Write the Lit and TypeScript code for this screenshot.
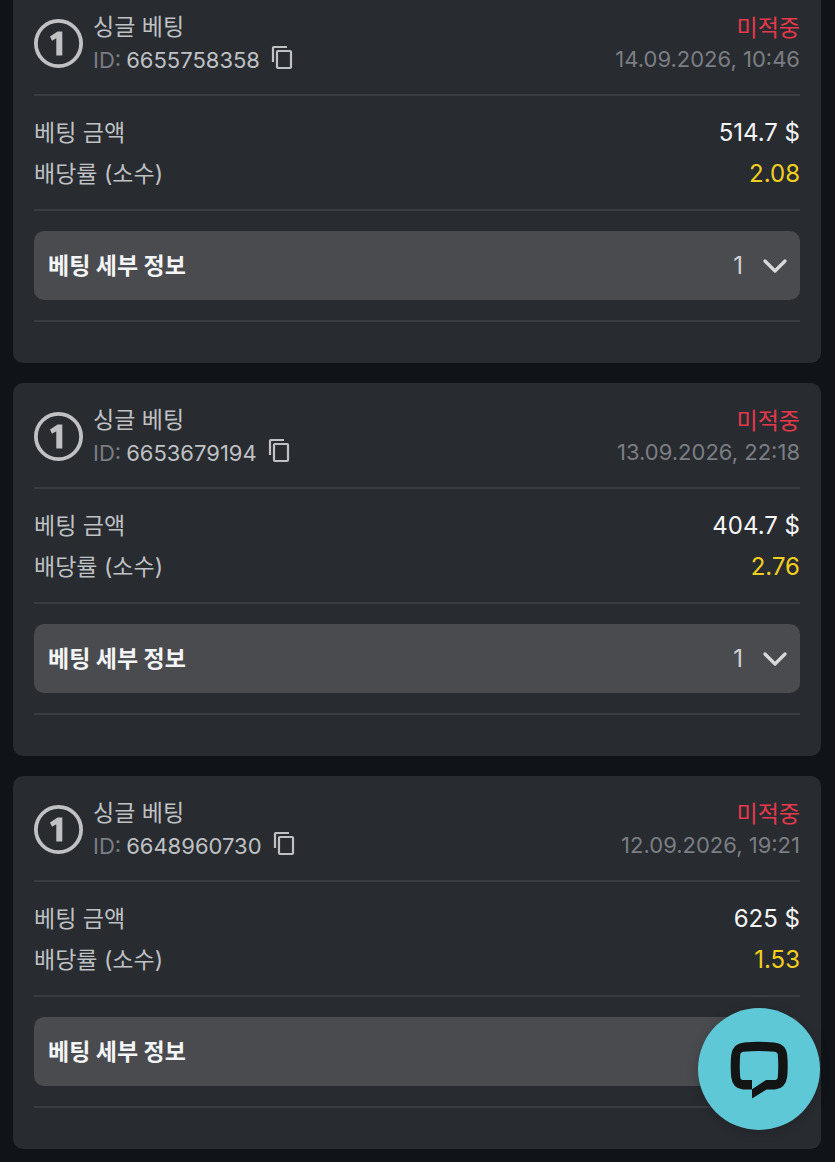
import { LitElement, html, css } from "lit";
import { customElement, property, state } from "lit/decorators.js";

interface Bet {
  id: string;
  date: string;
  amount: string;
  odds: string;
}

const BETS: Bet[] = [
  { id: "6655758358", date: "14.09.2026, 10:46", amount: "514.7 $", odds: "2.08" },
  { id: "6653679194", date: "13.09.2026, 22:18", amount: "404.7 $", odds: "2.76" },
  { id: "6648960730", date: "12.09.2026, 19:21", amount: "625 $", odds: "1.53" },
];

@customElement("bet-card")
class BetCard extends LitElement {
  @property({ attribute: false }) bet!: Bet;
  @state() private open = false;

  static styles = css`
    :host {
      display: block;
      background: #282b30;
      border-radius: 10px;
      padding: 0 21px 41px;
      color: #bfc1c4;
      font-size: 23px;
      line-height: 32px;
    }
    .header {
      display: flex;
      align-items: center;
      gap: 10px;
      height: 104px;
      padding-top: 2px;
      box-sizing: border-box;
    }
    .badge {
      width: 49px;
      height: 49px;
      flex: none;
    }
    .kind,
    .result {
      flex: 1;
      display: flex;
      flex-direction: column;
      padding-top: 2px;
    }
    .title {
      font-weight: 400;
      font-size: 23px;
      line-height: 32px;
      margin: 0;
    }
    .id {
      display: flex;
      align-items: center;
      font-size: 22px;
      line-height: 34px;
    }
    .label {
      color: #7b7e83;
      margin-right: 5px;
    }
    .copy {
      appearance: none;
      border: 0;
      background: none;
      padding: 0 0 4px;
      margin-left: 11px;
      color: inherit;
      display: flex;
      cursor: pointer;
    }
    .result {
      text-align: right;
    }
    .status {
      color: #e8394c;
      line-height: 30px;
    }
    .date {
      color: #7b7e83;
      font-size: 22px;
    }
    .rule {
      border: 0;
      height: 2px;
      margin: 0;
      background: #393c41;
    }
    .facts {
      margin: 0;
      padding: 16px 0 15px;
    }
    .row {
      display: flex;
      justify-content: space-between;
      align-items: center;
      height: 41px;
    }
    .value {
      margin: 0;
      color: #f4f5f6;
      font-size: 24px;
    }
    .odds {
      color: #f2cf1f;
    }
    .details {
      appearance: none;
      display: flex;
      align-items: center;
      width: 100%;
      height: 69px;
      margin: 20px 0;
      padding: 0 13px 0 14px;
      border: 0;
      border-radius: 10px;
      background: #494b4f;
      color: #f4f5f6;
      font: inherit;
      font-weight: 700;
      text-align: left;
      cursor: pointer;
    }
    .name {
      flex: 1;
    }
    .count {
      color: #d0d1d3;
      font-size: 24px;
      font-weight: 400;
      margin-right: 20px;
    }
    .open {
      transform: rotate(180deg);
    }
  `;

  render() {
    const b = this.bet;
    return html`
      <div class="header">
        <svg class="badge" viewBox="0 0 49 49" aria-hidden="true">
          <circle cx="24.500" cy="24.500" r="22.600" fill="none" stroke="#bfc1c4" stroke-width="3.800" />
          <path d="M16 17.400 23.600 12.400h4.700v24.200h-6V19.200l-4.300 2.600z" fill="#bfc1c4" />
        </svg>
        <div class="kind">
          <h2 class="title">싱글 베팅</h2>
          <div class="id">
            <span class="label">ID:</span><span>${b.id}</span>
            <button class="copy" aria-label="ID 복사">
              <svg width="22" height="26" viewBox="0 0 22 26" fill="none" stroke="currentColor" stroke-width="2.200">
                <path d="M2 17V2.800Q2 2 2.800 2H16" />
                <rect x="6" y="6" width="14" height="17" rx="1" />
              </svg>
            </button>
          </div>
        </div>
        <div class="result">
          <span class="status">미적중</span>
          <time class="date">${b.date}</time>
        </div>
      </div>
      <hr class="rule" />
      <dl class="facts">
        <div class="row"><dt>베팅 금액</dt><dd class="value">${b.amount}</dd></div>
        <div class="row"><dt>배당률 (소수)</dt><dd class="value odds">${b.odds}</dd></div>
      </dl>
      <hr class="rule" />
      <button class="details" aria-expanded=${this.open} @click=${() => (this.open = !this.open)}>
        <span class="name">베팅 세부 정보</span>
        <span class="count">1</span>
        <svg class=${this.open ? "open" : ""} width="24" height="16" viewBox="0 0 24 16" fill="none"
          stroke="#d8d9db" stroke-width="3.200" stroke-linecap="round" stroke-linejoin="round">
          <path d="M2 3 12 13 22 3" />
        </svg>
      </button>
      <hr class="rule" />
    `;
  }
}

@customElement("app-root")
class AppRoot extends LitElement {
  static styles = css`
    :host {
      display: block;
      height: 100vh;
      overflow: hidden;
      background: #101318;
      font-family: Inter, "Noto Sans CJK KR", sans-serif;
    }
    .list {
      display: flex;
      flex-direction: column;
      gap: 20px;
      margin-top: -10px;
      padding: 0 14px 0 13px;
    }
    .chat {
      position: fixed;
      right: 15px;
      bottom: 32px;
      width: 122px;
      height: 122px;
      padding: 2px 0 0;
      border: 0;
      border-radius: 50%;
      background: #5fc8d7;
      box-shadow: 0 2px 12px rgba(0, 0, 0, 0.2);
      display: grid;
      place-items: center;
      cursor: pointer;
    }
  `;

  render() {
    return html`
      <main class="list">${BETS.map((b) => html`<bet-card .bet=${b}></bet-card>`)}</main>
      <button class="chat" aria-label="채팅">
        <svg width="58" height="58" viewBox="0 0 58 58" aria-hidden="true">
          <path fill="#121514" fill-rule="evenodd"
            d="M14 1.500Q29 .2 44 1.500 56 2.500 57.200 14 58.200 25 57.200 36 55.500 47.500 45 48.600H36.500L22 57.500V48.600H13Q2.500 47.500 1.200 36 .2 25 1.200 14 2.500 2.500 14 1.500zM13.500 10.700Q10.600 11 10.200 13.800 9.300 25 10.200 36.200 10.600 39 13.500 39H22V48.300L36 39H44.500Q47.500 39 47.800 36.200 48.700 25 47.800 13.800 47.500 11 44.500 10.700 29 9.500 13.500 10.700z" />
        </svg>
      </button>
    `;
  }
}
